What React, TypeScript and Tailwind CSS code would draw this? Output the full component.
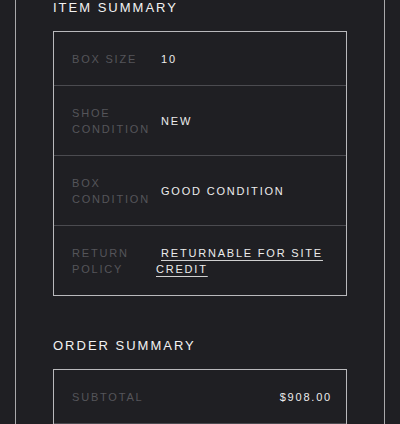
import React from 'react';

interface Row {
    label: string;
    value: string;
    link?: boolean;
}

const itemRows: Row[] = [
    { label: 'Box Size', value: '10' },
    { label: 'Shoe Condition', value: 'New' },
    { label: 'Box Condition', value: 'Good Condition' },
    { label: 'Return Policy', value: 'Returnable for site credit', link: true },
];

const SummaryRow: React.FC<{ row: Row; first: boolean }> = ({ row, first }) => (
    <div className={`flex items-center pl-[18px] pr-[14px] pt-[19px] pb-[18px] ${first ? '' : 'border-t border-[#4b4b50]'}`}>
        <div className="w-[84px] shrink-0 uppercase text-[#55555a]">{row.label}</div>
        <div className="flex-1 indent-[5px] uppercase text-[#ececec]">
            {row.link ? (
                <a href="#" className="underline underline-offset-[3px] decoration-[#d0d0d0]">
                    {row.value}
                </a>
            ) : (
                row.value
            )}
        </div>
    </div>
);

export default function App() {
    return (
        <div className="h-[424px] overflow-hidden bg-[#1f1f23] px-[15px] font-['Liberation_Sans',Arial,sans-serif]">
            <div className="h-full border-x border-[#a8a8ab] px-[37px]">
                <h2 className="text-[13px] leading-[16px] tracking-[2px] uppercase text-[#f2f2f2]">
                    Item Summary
                </h2>
                <div className="mt-[15px] border border-[#b9b9bc] text-[11px] leading-[16px] tracking-[1.8px]">
                    {itemRows.map((row, i) => (
                        <SummaryRow key={row.label} row={row} first={i === 0} />
                    ))}
                </div>

                <h2 className="mt-[42px] text-[13px] leading-[16px] tracking-[2px] uppercase text-[#f2f2f2]">
                    Order Summary
                </h2>
                {/* box continues below the fold */}
                <div className="mt-[15px] h-[80px] border-x border-t border-[#b9b9bc] text-[11px] leading-[16px] tracking-[1.8px]">
                    <div className="flex items-center justify-between border-b border-[#4b4b50] pl-[18px] pr-[14px] pt-[19px] pb-[18px]">
                        <span className="uppercase text-[#55555a]">Subtotal</span>
                        <span className="text-[#ececec]">$908.00</span>
                    </div>
                </div>
            </div>
        </div>
    );
}
